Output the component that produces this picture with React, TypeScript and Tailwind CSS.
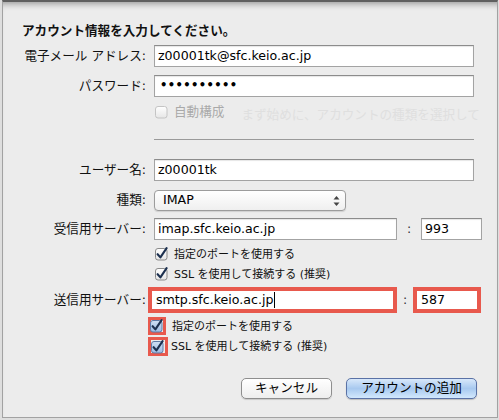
import type { ReactNode } from 'react';

const FONT = { fontFamily: '"DejaVu Sans", "Noto Sans CJK JP", sans-serif' };

function Label({ children }: { children: ReactNode }) {
  return <div className="w-[143px] shrink-0 text-right text-[12.6px] leading-none text-[#111]">{children}</div>;
}

function Field({ w, children }: { w: string; children?: ReactNode }) {
  return (
    <div className={`${w} h-[22px] flex items-center border border-[#a3a3a3] border-t-[#8c8c8c] bg-white pl-[3px] text-[12.6px] leading-none text-black shadow-[inset_0_1px_1px_rgba(0,0,0,0.1)]`}>
      {children}
    </div>
  );
}

function Check({ checked = true, disabled = false, focus = false }: { checked?: boolean; disabled?: boolean; focus?: boolean }) {
  const id = focus ? 'gf' : disabled ? 'gd' : 'gn';
  return (
    <svg width="14" height="14" viewBox="0 0 14 14" className="shrink-0">
      <defs>
        <linearGradient id={id} x1="0" y1="0" x2="0" y2="1">
          {focus ? (
            <>
              <stop offset="0" stopColor="#cfe0f4" />
              <stop offset="1" stopColor="#9dbbe2" />
            </>
          ) : (
            <>
              <stop offset="0" stopColor="#ffffff" />
              <stop offset="1" stopColor="#e6e6e6" />
            </>
          )}
        </linearGradient>
      </defs>
      <rect
        x="0.5"
        y="1.5"
        width="11.5"
        height="11.5"
        rx="2.5"
        fill={`url(#${id})`}
        stroke={disabled ? '#c4c4c4' : focus ? '#5d7aa6' : '#8a8a8a'}
      />
      {checked && (
        <path d="M2.6 7.2 L5.4 10.4 L11.6 1.2" fill="none" stroke="#1d3150" strokeWidth="2.1" strokeLinecap="round" strokeLinejoin="round" />
      )}
    </svg>
  );
}

function CheckRow({ label, dim }: { label: string; dim?: boolean }) {
  return (
    <div className="flex items-center gap-[5px] text-[11px] leading-none">
      <Check checked={!dim} disabled={dim} />
      <span className={dim ? 'text-[12.6px] text-[#a9a9a9]' : 'text-[#111]'}>{label}</span>
    </div>
  );
}

export default function App() {
  return (
    <div className="w-[499px] h-[420px] bg-[#dedede] pl-[2px] pr-px pb-[2px] flex" style={FONT}>
      <div className="flex-1 flex flex-col border-t-2 border-t-[#5f5f5f] border-x border-b border-[#a2a2a2] bg-[#ececec] shadow-[inset_0_7px_6px_-5px_rgba(0,0,0,0.35)] overflow-hidden">
        {/* title */}
        <div className="mt-[21px] pl-[19px] h-[16px] flex items-center text-[12.6px] font-bold leading-none text-[#111]">
          アカウント情報を入力してください。
        </div>

        <div className="mt-[6px] flex items-center h-[22px] gap-[8px]">
          <Label>電子メール アドレス:</Label>
          <Field w="w-[320px]">z00001tk@sfc.keio.ac.jp</Field>
        </div>

        <div className="mt-[8px] flex items-center h-[22px] gap-[8px]">
          <Label>パスワード:</Label>
          <Field w="w-[320px]">
            <span className="pl-[2px] text-[11.5px] font-bold tracking-[0.4px]">••••••••••</span>
          </Field>
        </div>

        {/* disabled auto-config, with the sheet's faded background text behind it */}
        <div className="mt-[8px] flex items-center h-[14px] pl-[152px] whitespace-nowrap">
          <CheckRow label="自動構成" dim />
          <span className="ml-[17px] mt-[6px] text-[12.6px] leading-none text-[#dfdfdf]">まず始めに、アカウントの種類を選択して</span>
        </div>

        <div className="mt-[20px] ml-[151px] w-[320px] h-px bg-[#9a9a9a]" />

        <div className="mt-[19px] flex items-center h-[22px] gap-[8px]">
          <Label>ユーザー名:</Label>
          <Field w="w-[320px]">z00001tk</Field>
        </div>

        <div className="mt-[9px] flex items-center h-[21px] gap-[8px]">
          <Label>種類:</Label>
          <div className="w-[192px] h-[21px] flex items-center justify-between rounded-[4px] border border-[#9c9c9c] bg-linear-to-b from-white to-[#efefef] pl-[8px] pr-[5px] text-[12.6px] leading-none text-black shadow-[0_1px_1px_rgba(0,0,0,0.12)]">
            <span>IMAP</span>
            <svg width="7" height="12" viewBox="0 0 7 12">
              <path d="M3.5 1 L6.5 4.6 H0.5 Z" fill="#444" />
              <path d="M3.5 11 L6.5 7.4 H0.5 Z" fill="#444" />
            </svg>
          </div>
        </div>

        <div className="mt-[7px] flex items-center h-[22px] gap-[8px]">
          <Label>受信用サーバー:</Label>
          <Field w="w-[243px]">imap.sfc.keio.ac.jp</Field>
          <span className="w-[8px] text-center text-[12.6px] leading-none text-[#333]">:</span>
          <Field w="w-[61px]">993</Field>
        </div>

        <div className="mt-[7px] flex items-center h-[14px] pl-[152px]">
          <CheckRow label="指定のポートを使用する" />
        </div>
        <div className="mt-[6px] flex items-center h-[14px] pl-[152px]">
          <CheckRow label="SSL を使用して接続する (推奨)" />
        </div>

        <div className="mt-[6px] flex items-center h-[26px]">
          <Label>送信用サーバー:</Label>
          <div className="ml-[2px] w-[249px] h-[26px] border-[4px] border-[#e8594d] bg-white flex items-center pl-[4px] text-[12.6px] leading-none text-black">
            smtp.sfc.keio.ac.jp
            <span className="ml-px inline-block h-[16px] w-px bg-black" />
          </div>
          <span className="ml-[4px] w-[8px] text-center text-[12.6px] leading-none text-[#333]">:</span>
          <div className="ml-[4px] w-[68px] h-[26px] border-[4px] border-[#e8594d] bg-white flex items-center pl-[4px] text-[12.6px] leading-none text-black">
            587
          </div>
        </div>

        <div className="mt-[4px] flex items-center h-[18px] pl-[145px]">
          <div className="w-[18px] h-[18px] border-[3px] border-[#e8594d] flex items-center justify-center">
            <Check focus />
          </div>
          <span className="ml-[6px] text-[11px] leading-none text-[#111]">指定のポートを使用する</span>
        </div>
        <div className="mt-[2px] flex items-center h-[19px] pl-[145px]">
          <div className="w-[20px] h-[19px] border-[3px] border-[#e8594d] flex items-center justify-center">
            <Check focus />
          </div>
          <span className="ml-[3px] text-[11px] leading-none text-[#111]">SSL を使用して接続する (推奨)</span>
        </div>

        <div className="mt-[22px] flex items-center h-[21px] pl-[238px] gap-[14px]">
          <button className="w-[91px] h-[21px] rounded-[5px] border border-[#8e8e8e] bg-linear-to-b from-white to-[#eeeeee] text-[12.6px] leading-none text-black shadow-[0_1px_1px_rgba(0,0,0,0.15)]">
            キャンセル
          </button>
          <button className="w-[131px] h-[21px] rounded-[5px] border border-[#5a72a6] bg-linear-to-b from-[#d8e8fa] via-[#a8c9ef] to-[#d2e8fd] text-[12.6px] leading-none text-black shadow-[0_1px_1px_rgba(0,0,0,0.2)]">
            アカウントの追加
          </button>
        </div>
      </div>
    </div>
  );
}
